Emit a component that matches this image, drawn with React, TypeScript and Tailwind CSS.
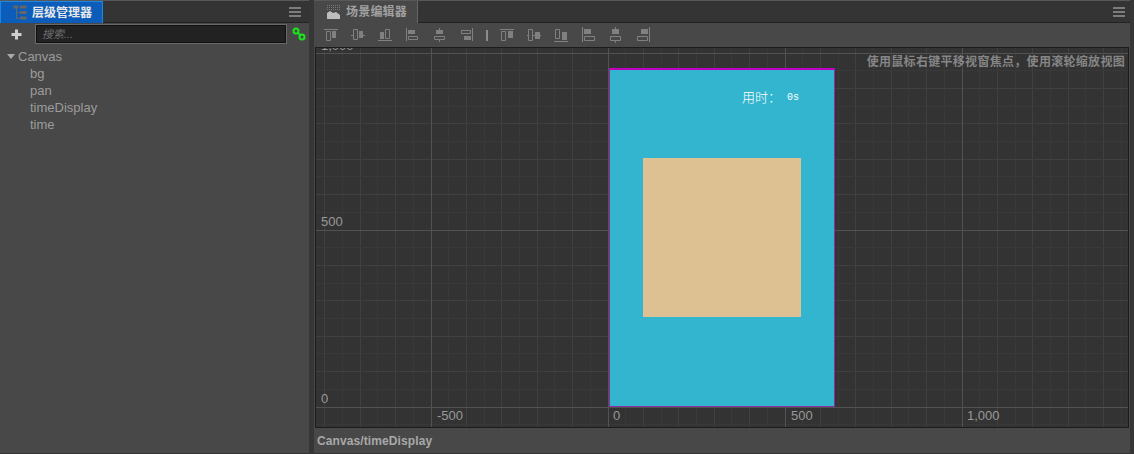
const SANS = "font-['Liberation_Sans','Noto_Sans_CJK_SC',sans-serif]";

function Grid() {
  const xs: number[] = [];
  for (let k = -6; k <= 40; k++) xs.push(k);
  const ys: number[] = [];
  for (let k = 0; k <= 21; k++) ys.push(k);
  return (
    <svg className="absolute inset-0" width="812" height="379">
      {xs.map((k) => {
        const x = Math.floor(115 + k * 17.7) + 0.5;
        return <line key={k} x1={x} x2={x} y1="0" y2="379" stroke={k % 2 === 0 ? "#404040" : "#393939"} />;
      })}
      {ys.map((k) => {
        const y = Math.floor(5 + k * 17.7) + 0.5;
        return <line key={k} y1={y} y2={y} x1="0" x2="812" stroke={k % 2 === 0 ? "#404040" : "#393939"} />;
      })}
      {[115.5, 292.5, 469.5, 646.5].map((x) => (
        <line key={x} x1={x} x2={x} y1="0" y2="379" stroke="#525252" />
      ))}
      {[5.5, 182.5, 359.5].map((y) => (
        <line key={y} y1={y} y2={y} x1="0" x2="812" stroke="#525252" />
      ))}
    </svg>
  );
}

const ICON = "#808080";

function Box({ x, y, w, h }: { x: number; y: number; w: number; h: number }) {
  return <rect x={x} y={y} width={w} height={h} fill={ICON} stroke="none" />;
}

// align-edge glyphs, svg top is y=27
const ALIGN = [
  { cls: "w-[27px]", glyph: <><path d="M0 2.500h14M2.500 4.500h4v9h-4z" /><Box x={8} y={4} w={4} h={7} /></> },
  { cls: "w-[27px]", glyph: <><path d="M0 8.500h2M12 8.500h2M2.500 2.500h4v10h-4z" /><Box x={8} y={4} w={4} h={7} /></> },
  { cls: "w-[28px]", glyph: <><path d="M0 13.500h14M7.500 2.500h4v9h-4z" /><Box x={2} y={5} w={4} h={7} /></> },
  { cls: "w-[28px]", glyph: <><path d="M0.500 1v13M2.500 9.500h9v3h-9z" /><Box x={2} y={3} w={7} h={4} /></> },
  { cls: "w-[27px]", glyph: <><path d="M5.500 1v2M5.500 13v2M0.500 9.500h10v3h-10z" /><Box x={2} y={3} w={7} h={4} /></> },
  { cls: "w-[25px]", glyph: <><path d="M11.500 1v13M0.500 3.500h9v3h-9z" /><Box x={3} y={9} w={7} h={4} /></> },
];

// same family, outlined box stands apart from the filled one
const DISTRIBUTE = [
  { cls: "w-[27px]", glyph: <><path d="M0 2.500h14M1.500 4.500h4v9h-4z" /><Box x={8} y={4} w={5} h={7} /></> },
  { cls: "w-[27px]", glyph: <><path d="M0 8.500h1M6 8.500h2M13 8.500h1M1.500 2.500h4v11h-4z" /><Box x={8} y={5} w={5} h={7} /></> },
  { cls: "w-[28px]", glyph: <><path d="M0 14.500h14M1.500 2.500h4v9h-4z" /><Box x={8} y={5} w={5} h={8} /></> },
  { cls: "w-[28px]", glyph: <><path d="M0.500 0v15M2.500 9.500h10v4h-10z" /><Box x={2} y={2} w={7} h={5} /></> },
  { cls: "w-[27px]", glyph: <><path d="M5.500 0v2M5.500 14v2M0.500 9.500h10v4h-10z" /><Box x={2} y={2} w={7} h={5} /></> },
  { cls: "w-[16px]", glyph: <><path d="M12.500 0v15M0.500 9.500h10v4h-10z" /><Box x={4} y={2} w={7} h={5} /></> },
];

function IconRow({ items }: { items: { cls: string; glyph: React.ReactNode }[] }) {
  return (
    <div className="flex">
      {items.map((item, i) => (
        <div key={i} className={item.cls}>
          <svg className="block" width="16" height="16" viewBox="0 0 16 16" fill="none" stroke={ICON} strokeWidth="1">
            {item.glyph}
          </svg>
        </div>
      ))}
    </div>
  );
}

function MenuIcon() {
  return (
    <div className="flex w-[12px] flex-col gap-[2px]">
      <div className="h-[2px] bg-[#7c7c7c]" />
      <div className="h-[2px] bg-[#7c7c7c]" />
      <div className="h-[2px] bg-[#7c7c7c]" />
    </div>
  );
}

function HierarchyPanel() {
  return (
    <div className="flex w-[309px] shrink-0 flex-col border-y border-t-[#585858] border-b-[#333] bg-[#484848]">
      <div className="flex h-[22px] items-stretch justify-between border-b border-[#222] bg-[#343434]">
        <div className="mb-[-1px] flex w-[103px] items-center gap-[5px] border border-b-0 border-[#1f86e0] bg-[#0c5cba] pl-[12px]">
          <svg width="14" height="15" viewBox="0 0 14 15" fill="none" stroke="#666" strokeWidth="1">
            <path d="M3.500 2v11.500h3M3.500 7.500h3" />
            <rect x="0.500" y="0.500" width="5" height="3" fill="#666" stroke="none" />
            <rect x="7" y="0.500" width="6.500" height="3" fill="#666" stroke="none" />
            <rect x="7" y="6" width="6.500" height="3" fill="#666" stroke="none" />
            <rect x="7" y="11.500" width="6.500" height="3" fill="#666" stroke="none" />
          </svg>
          <span className="text-[12px] font-bold text-[#e8e8e8]">层级管理器</span>
        </div>
        <div className="flex items-center pr-[8px]">
          <MenuIcon />
        </div>
      </div>
      <div className="flex h-[22px] items-center pl-[11px] pr-[3px]">
        <svg width="11" height="11" viewBox="0 0 11 11" fill="#cfcfcf">
          <path d="M4 0.500h3v3.500h3.500v3h-3.500v3.500h-3v-3.500h-3.500v-3h3.500z" />
        </svg>
        <div className="ml-[13px] flex h-[20px] flex-1 items-center border border-[#6a6a6a] bg-[#222] pl-[6px] shadow-[inset_0_0_0_1px_#111]">
          <span className="text-[11px] italic text-[#6e6e6e]">搜索...</span>
        </div>
        <svg className="ml-[5px]" width="14" height="14" viewBox="0 0 14 14" fill="none" stroke="#19e619" strokeWidth="2">
          <circle cx="4" cy="4" r="2.500" />
          <circle cx="10" cy="10" r="2.500" />
          <path d="M6 6l2 2" />
        </svg>
      </div>
      <div className="pt-[3px] text-[13px] leading-[17px] text-[#9c9c9c]">
        <div className="flex items-center pl-[7px]">
          <span className="mr-[3px] h-0 w-0 border-x-[4px] border-t-[5px] border-x-transparent border-t-[#aaa]" />
          Canvas
        </div>
        {["bg", "pan", "timeDisplay", "time"].map((name) => (
          <div key={name} className="pl-[30px]">
            {name}
          </div>
        ))}
      </div>
    </div>
  );
}

function SceneCanvas() {
  return (
    <div className="relative h-[379px] overflow-hidden bg-[#333]">
      <Grid />
      <span className="absolute left-[5px] top-[-10px] text-[13px] leading-[15px] text-[#999]">1,000</span>
      <span className="absolute left-[5px] top-[166px] text-[13px] leading-[15px] text-[#999]">500</span>
      <span className="absolute left-[5px] top-[343px] text-[13px] leading-[15px] text-[#999]">0</span>
      <span className="absolute left-[121px] top-[360px] text-[13px] leading-[15px] text-[#999]">-500</span>
      <span className="absolute left-[297px] top-[360px] text-[13px] leading-[15px] text-[#999]">0</span>
      <span className="absolute left-[475px] top-[360px] text-[13px] leading-[15px] text-[#999]">500</span>
      <span className="absolute left-[651px] top-[360px] text-[13px] leading-[15px] text-[#999]">1,000</span>
      <div className="absolute left-[293px] top-[20px] h-[339px] w-[226px] border border-t-2 border-[#8a2fa0] border-t-[#c000c0] bg-[#33b5cf]">
        <span className="absolute left-[132px] top-[20px] text-[13px] font-light leading-[16px] text-white">用时：</span>
        <span className="absolute left-[177px] top-[21px] font-['Liberation_Mono',monospace] text-[10px] leading-[14px] text-white">0s</span>
        <div className="absolute left-[33px] top-[88px] h-[159px] w-[158px] bg-[#dec192]" />
      </div>
      <span className="absolute right-[3px] top-[6px] text-[12px] font-bold leading-[16px] tracking-[0.3px] text-[#868686]">
        使用鼠标右键平移视窗焦点，使用滚轮缩放视图
      </span>
    </div>
  );
}

function ScenePanel() {
  return (
    <div className="flex min-w-0 flex-1 flex-col border-y border-t-[#585858] border-b-[#333] bg-[#484848]">
      <div className="flex h-[22px] items-stretch bg-[#343434]">
        <div className="flex w-[104px] items-center gap-[6px] border-r border-[#666] bg-[#484848] pl-[13px]">
          <svg width="13" height="14" viewBox="0 0 13 14">
            <path d="M0 14V8l3-2 3 2 3-1 4 3v4z" fill="#bdbdbd" />
            <path d="M0 0.500h13M0 2.500h13M0 4.500h13" stroke="#777" strokeDasharray="1 1" />
          </svg>
          <span className="text-[12px] font-bold tracking-[0.2px] text-[#a0a0a0]">场景编辑器</span>
        </div>
        <div className="flex flex-1 items-center justify-end border-b border-[#222] pr-[5px]">
          <MenuIcon />
        </div>
      </div>
      <div className="flex h-[24px] items-center pl-[10px]">
        <IconRow items={ALIGN} />
        <div className="mr-[12px] h-[11px] w-[2px] bg-[#8c8c8c]" />
        <IconRow items={DISTRIBUTE} />
      </div>
      <div className="ml-px mr-px border border-[#1c1c1c]">
        <SceneCanvas />
      </div>
      <div className="flex flex-1 items-center pl-[3px] text-[12px] font-bold tracking-[0.1px] text-[#a8a8a8]">Canvas/timeDisplay</div>
    </div>
  );
}

export default function App() {
  return (
    <div className={`flex h-[454px] w-[1134px] bg-[#363636] ${SANS}`}>
      <HierarchyPanel />
      <div className="w-[5px] shrink-0" />
      <ScenePanel />
      <div className="w-[4px] shrink-0" />
    </div>
  );
}
